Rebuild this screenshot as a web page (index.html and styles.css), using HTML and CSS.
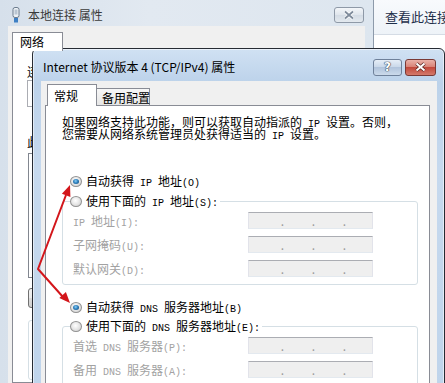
FILE: index.html
```html
<!DOCTYPE html>
<html lang="zh-CN">
<head>
<meta charset="utf-8">
<title>Internet 协议版本 4 (TCP/IPv4) 属性</title>
<link rel="stylesheet" href="styles.css">
</head>
<body>
<div class="desktop">
  <section class="bgwin">
    <header class="bg-title">
      <svg class="bg-icon" viewBox="0 0 8 16" width="8" height="16">
        <rect x="1" y="0.5" width="6" height="10" rx="2" fill="#eef2f6" stroke="#6b7b8c"/>
        <rect x="2.5" y="2.5" width="3" height="5" fill="#b9c5d1"/>
        <rect x="2" y="11" width="4" height="4.5" fill="#3f80c4"/>
      </svg>
      <span class="bg-title-text">本地连接 属性</span>
      <span class="bg-close" role="button">
        <svg viewBox="0 0 12 10" width="12" height="10">
          <path d="M2 1.5 10 8.5M10 1.5 2 8.5" stroke="#ffffff" stroke-width="3.4"/>
          <path d="M2 1.5 10 8.5M10 1.5 2 8.5" stroke="#7e8b9b" stroke-width="1.8"/>
        </svg>
      </span>
    </header>
    <div class="bg-client">
      <div class="bg-tabs"><span class="bg-tab">网络</span></div>
      <div class="bg-panel">
        <p class="bg-label">连接时使用:</p>
        <div class="bg-box"></div>
        <p class="bg-label second">此连接使用下列项目:</p>
        <div class="bg-list"></div>
        <div class="bg-btn">安装(N)...</div>
        <div class="bg-group"></div>
      </div>
    </div>
  </section>

  <section class="sidewin">
    <div class="side-bar">查看此连接的状态</div>
  </section>

  <section class="dialog">
    <header class="dlg-title">
      <span class="dlg-title-text">Internet 协议版本 4 (TCP/IPv4) 属性</span>
      <span class="cap-btn help" role="button">?</span>
      <span class="cap-btn close" role="button">
        <svg viewBox="0 0 13 10" width="13" height="10">
          <path d="M2.5 1.5 10.5 8.5M10.5 1.5 2.5 8.5" stroke="#5a2621" stroke-width="3.6"/>
          <path d="M2.5 1.5 10.5 8.5M10.5 1.5 2.5 8.5" stroke="#ffffff" stroke-width="2"/>
        </svg>
      </span>
    </header>
    <div class="dlg-client">
      <div class="tabs">
        <span class="tab active">常规</span>
        <span class="tab">备用配置</span>
      </div>
      <div class="panel">
        <p class="intro">如果网络支持此功能，则可以获取自动指派的<span class="lat"> IP </span>设置。否则，<br>您需要从网络系统管理员处获得适当的<span class="lat"> IP </span>设置。</p>

        <label class="opt top"><span class="radio on"></span><span>自动获得<span class="lat"> IP </span>地址<span class="lat">(O)</span></span></label>
        <div class="group first">
          <label class="opt head"><span class="radio"></span><span>使用下面的<span class="lat"> IP </span>地址<span class="lat">(S):</span></span></label>
          <div class="row"><span class="lbl"><span class="lat">IP </span>地址<span class="lat">(I):</span></span><span class="ip"><i>.</i><i>.</i><i>.</i></span></div>
          <div class="row"><span class="lbl">子网掩码<span class="lat">(U):</span></span><span class="ip"><i>.</i><i>.</i><i>.</i></span></div>
          <div class="row"><span class="lbl">默认网关<span class="lat">(D):</span></span><span class="ip"><i>.</i><i>.</i><i>.</i></span></div>
        </div>

        <label class="opt top dns"><span class="radio on"></span><span>自动获得<span class="lat"> DNS </span>服务器地址<span class="lat">(B)</span></span></label>
        <div class="group second">
          <label class="opt head"><span class="radio"></span><span>使用下面的<span class="lat"> DNS </span>服务器地址<span class="lat">(E):</span></span></label>
          <div class="row"><span class="lbl">首选<span class="lat"> DNS </span>服务器<span class="lat">(P):</span></span><span class="ip"><i>.</i><i>.</i><i>.</i></span></div>
          <div class="row"><span class="lbl">备用<span class="lat"> DNS </span>服务器<span class="lat">(A):</span></span><span class="ip"><i>.</i><i>.</i><i>.</i></span></div>
        </div>
      </div>
    </div>
  </section>

  <svg class="arrows" viewBox="0 0 445 383" width="445" height="383">
    <polyline points="66,195 38,269 63,297" fill="none" stroke="#d3161b" stroke-width="2" stroke-linejoin="round"/>
    <polygon points="70,185 70.4,196.9 61.9,193.7" fill="#d3161b"/>
    <polygon points="70,303 65.9,291.9 59.3,297.9" fill="#d3161b"/>
  </svg>
</div>
</body>
</html>
```
FILE: styles.css
```css
* { box-sizing: border-box; }
html, body { margin: 0; padding: 0; }
body {
  width: 445px;
  height: 383px;
  overflow: hidden;
  background: #fff;
  color: #000;
  font-family: "Noto Sans CJK SC", "Noto Sans", sans-serif;
  font-size: 12px;
}
p { margin: 0; }
.lat { font-family: "Liberation Mono", monospace; font-size: 10px; line-height: 0; }

.desktop {
  position: relative;
  display: flex;
  width: 445px;
  height: 383px;
  overflow: hidden;
}

/* background window */
.bgwin {
  flex: none;
  width: 374px;
  height: 383px;
  display: flex;
  flex-direction: column;
  background: linear-gradient(90deg, #d6e0eb, #e2e9f1 40%, #dde6ef);
  border-right: 1px solid #8d9aaa;
}
.bg-title {
  height: 26px;
  flex: none;
  display: flex;
  align-items: center;
  padding: 4px 9px 0 12px;
}
.bg-icon { flex: none; margin-right: 8px; }
.bg-title-text { color: #3a3a3a; line-height: 14px; white-space: nowrap; }
.bg-close {
  margin-left: auto;
  align-self: flex-start;
  margin-top: 3px;
  width: 30px;
  height: 16px;
  display: flex;
  align-items: center;
  justify-content: center;
  border: 1px solid #8e99a7;
  border-radius: 3px;
  background: linear-gradient(#f3f6f9, #dfe5ec 50%, #d3dbe4 50%, #e3e9ef);
}
.bg-client {
  flex: 1;
  margin: 0 8px;
  padding: 6px 0 0 4px;
  background: #f0f0f0;
  display: flex;
  flex-direction: column;
}
.bg-tabs { display: flex; height: 18px; flex: none; }
.bg-tab {
  position: relative;
  z-index: 1;
  width: 51px;
  height: 19px;
  padding-left: 7px;
  line-height: 17px;
  background: #fff;
  border: 1px solid #898c95;
  border-bottom: none;
}
.bg-panel {
  flex: 1;
  background: #fff;
  border: 1px solid #898c95;
  padding: 15px 0 0 14px;
}
.bg-label { line-height: 12px; white-space: nowrap; }
.bg-label.second { margin-top: 29px; }
.bg-box { margin-top: 2px; width: 330px; height: 27px; border: 1px solid #abadb3; }
.bg-list { margin-top: 5px; margin-left: 1px; width: 330px; height: 125px; border: 1px solid #828790; }
.bg-btn {
  margin-top: 10px;
  margin-left: 1px;
  width: 80px;
  height: 20px;
  border: 1px solid #707070;
  border-radius: 3px;
  background: linear-gradient(#f2f2f2, #ebebeb 50%, #dddddd 50%, #cfcfcf);
  font-size: 12px;
  line-height: 18px;
  text-align: center;
}
.bg-group { margin-top: 12px; margin-left: 1px; width: 330px; height: 60px; border: 1px solid #d5dfe5; border-radius: 3px; }

/* side window */
.sidewin { flex: 1; background: #fff; min-width: 0; }
.side-bar {
  height: 35px;
  padding-left: 11px;
  line-height: 34px;
  font-size: 13px;
  color: #1e2f4a;
  white-space: nowrap;
  overflow: hidden;
  background: linear-gradient(#f8fafd, #eef3f8);
  border-bottom: 1px solid #d5dce5;
}

/* dialog */
.dialog {
  position: absolute;
  left: 32px;
  top: 48px;
  width: 413px;
  height: 345px;
  display: flex;
  flex-direction: column;
  border: 1px solid #262b33;
  border-radius: 6px 6px 0 0;
  background: linear-gradient(180deg, #d0e1f3 0, #bcd2ea 34px, #c6d9ee 120px, #bfd4eb);
  box-shadow: inset 0 0 0 1px rgba(255, 255, 255, 0.55);
}
.dlg-title {
  flex: none;
  height: 32px;
  display: flex;
  align-items: center;
  padding: 4px 8px 0 10px;
}
.dlg-title-text { flex: 1; line-height: 14px; white-space: nowrap; }
.cap-btn {
  height: 17px;
  display: flex;
  align-items: center;
  justify-content: center;
  border-radius: 3px;
}
.help {
  width: 29px;
  margin-right: 3px;
  border: 1px solid #6f819a;
  background: linear-gradient(#e6eef7, #c7d6e8 50%, #b1c4dc 50%, #cbdaeb);
  color: #fff;
  font-family: "DejaVu Sans", sans-serif;
  font-weight: bold;
  font-size: 12px;
  line-height: 15px;
  text-shadow: 0 0 1px #2f3d52, 0 0 1px #2f3d52, 0 0 1px #2f3d52;
}
.close {
  width: 31px;
  border: 1px solid #7a3a36;
  background: linear-gradient(#eab1a8, #d77f73 50%, #c2493c 50%, #d47a6b);
}
.dlg-client {
  flex: 1;
  margin: 0 7px 0 8px;
  padding-top: 3px;
  background: #f0f0f0;
  display: flex;
  flex-direction: column;
}
.tabs {
  flex: none;
  display: flex;
  align-items: flex-end;
  height: 21px;
  padding-left: 6px;
}
.tab {
  height: 17px;
  width: 53px;
  padding-left: 5px;
  line-height: 17px;
  white-space: nowrap;
  border: 1px solid #898c95;
  border-left: none;
  border-bottom: none;
  background: linear-gradient(#f7f7f7, #e6e6e6);
}
.tab.active {
  position: relative;
  z-index: 1;
  width: 50px;
  height: 22px;
  margin-bottom: -1px;
  padding-left: 6px;
  line-height: 21px;
  border-left: 1px solid #898c95;
  background: #fff;
}
.panel {
  flex: 1;
  margin: 0 7px 0 4px;
  padding: 10px 11px 0 16px;
  background: #fff;
  border: 1px solid #898c95;
}
.intro { line-height: 12px; white-space: nowrap; margin-bottom: 32px; }

.opt {
  display: flex;
  align-items: center;
  gap: 4px;
  height: 18px;
  line-height: 14px;
  white-space: nowrap;
}
.opt.top { margin-left: 8px; }
.opt.dns { margin-top: 13px; }
.opt.head {
  width: fit-content;
  margin: -10px 0 0 7px;
  padding-right: 2px;
  background: #fff;
}
.radio {
  position: relative;
  flex: none;
  width: 12px;
  height: 11px;
  border-radius: 50%;
  border: 1px solid #939393;
  background: radial-gradient(circle at 45% 40%, #ffffff 0, #e9e9e9 45%, #c9c9c9 100%);
}
.radio.on::after {
  content: "";
  position: absolute;
  inset: 2px;
  border-radius: 50%;
  background: radial-gradient(circle at 45% 40%, #8fd0f5 0, #2f82c0 45%, #0d3c69 100%);
}

.group {
  border: 1px solid #d5dfe5;
  border-radius: 3px;
  padding-bottom: 7px;
  display: flex;
  flex-direction: column;
  gap: 7px;
}
.group.first { margin-top: 11px; }
.group.second { margin-top: 10px; }
.group .head + .row { margin-top: -5px; }
.row {
  display: grid;
  grid-template-columns: 175px 125px;
  align-items: center;
  height: 17px;
  line-height: 14px;
  padding-left: 10px;
}
.lbl { color: #a2a2a2; white-space: nowrap; }
.ip {
  height: 17px;
  display: grid;
  grid-template-columns: repeat(3, 31px);
  padding-left: 4px;
  line-height: 15px;
  border: 1px solid #e2e3ea;
  border-top-color: #abadb3;
  border-bottom-color: #e3e9ef;
  background: #efefef;
  color: #9a9a9a;
}
.ip i { font-style: normal; text-align: right; }

.arrows {
  position: absolute;
  left: 0;
  top: 0;
  pointer-events: none;
}
```
